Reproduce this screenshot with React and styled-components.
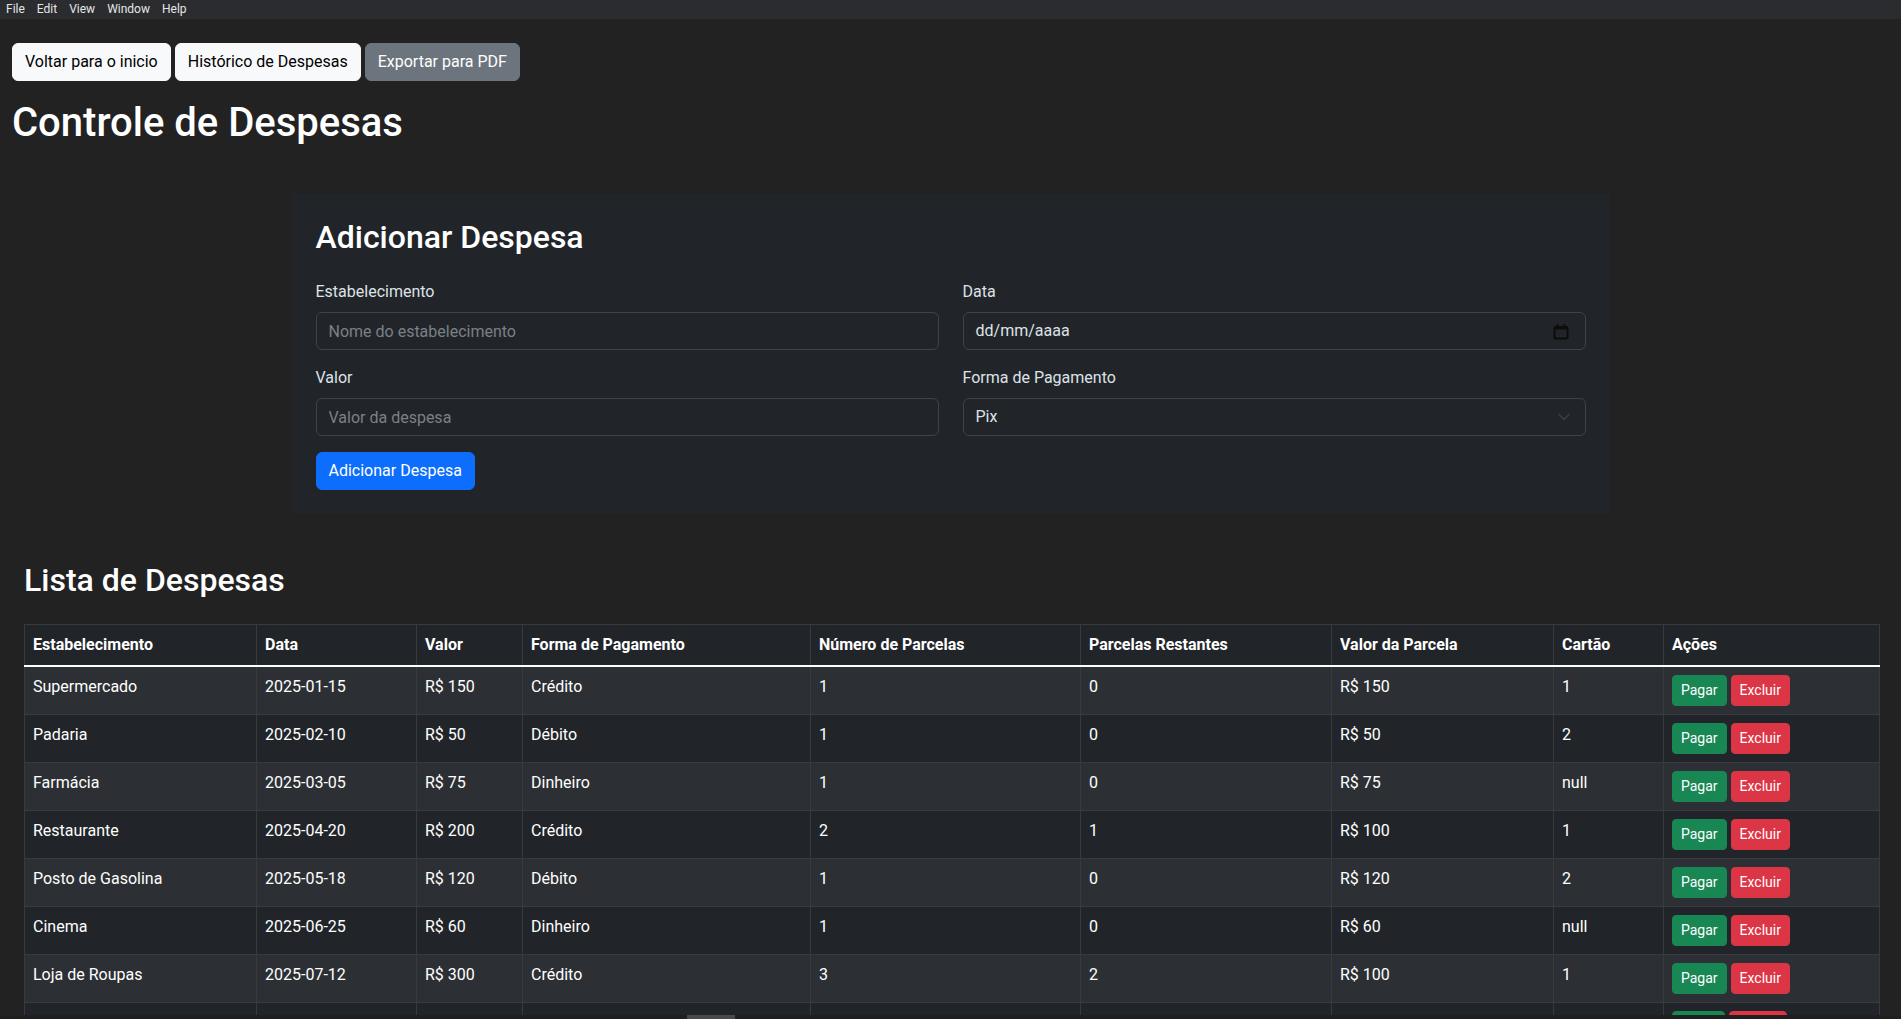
import React from "react";
import styled, { createGlobalStyle } from "styled-components";

const GlobalStyle = createGlobalStyle`
  html, body {
    margin: 0;
    padding: 0;
    background: #222222;
    overflow: hidden;
  }
  body {
    font-family: Roboto, "Liberation Sans", Arial, sans-serif;
    color: #dee2e6;
    font-size: 16px;
    line-height: 1.5;
  }
  * { box-sizing: border-box; }
`;

const MenuBar = styled.div`
  height: 19px;
  background: #2b2c30;
  display: flex;
  align-items: center;
`;

const MenuItem = styled.span`
  font-size: 12px;
  line-height: 19px;
  color: #e6e6e6;
  padding: 0 6px;
`;

const Page = styled.div`
  padding: 24px 12px 0 12px;
`;

const Toolbar = styled.div`
  display: flex;
  gap: 4px;
`;

const Btn = styled.button`
  font-family: inherit;
  font-size: ${(p) => (p.$sm ? "14px" : "16px")};
  line-height: ${(p) => (p.$sm ? "21px" : "24px")};
  min-height: ${(p) => (p.$sm ? "31px" : "38px")};
  padding: ${(p) => (p.$sm ? "4px 8px" : "6px 12px")};
  border-radius: ${(p) => (p.$sm ? "4px" : "6px")};
  border: 1px solid ${(p) => p.$bg};
  background: ${(p) => p.$bg};
  color: ${(p) => p.$fg};
  min-width: ${(p) => p.$minw || 0}px;
  cursor: pointer;
  white-space: nowrap;
`;

const Title = styled.h1`
  margin: 18px 0 0 0;
  font-size: 40px;
  line-height: 48px;
  font-weight: 500;
  color: #ffffff;
`;

const Card = styled.section`
  max-width: 1318px;
  margin: 47px auto 47px auto;
  background: #212529;
  padding: 24px;
`;

const SubTitle = styled.h2`
  margin: 0 0 24px 0;
  font-size: 32px;
  line-height: 38.4px;
  font-weight: 500;
  color: #ffffff;
`;

const FormGrid = styled.div`
  display: grid;
  grid-template-columns: 1fr 1fr;
  column-gap: 24px;
  row-gap: 16px;
  margin-bottom: 16px;
`;

const Field = styled.div`
  display: flex;
  flex-direction: column;
`;

const Label = styled.label`
  font-size: 16px;
  line-height: 24px;
  margin-bottom: 8px;
  color: #dee2e6;
`;

const Input = styled.input`
  font-family: inherit;
  height: 38px;
  font-size: 16px;
  padding: 6px 12px;
  border: 1px solid #3e4349;
  border-radius: 6px;
  background: #212529;
  color: #dee2e6;
  outline: none;
  &::placeholder {
    color: #7b8087;
  }
`;

const FakeBox = styled.div`
  height: 38px;
  display: flex;
  align-items: center;
  justify-content: space-between;
  padding: 6px ${(p) => p.$pr || 12}px 6px 12px;
  border: 1px solid #3e4349;
  border-radius: 6px;
  background: #212529;
  color: #dee2e6;
  font-size: 16px;
`;

const ListSection = styled.section`
  padding: 0 10px 0 12px;
`;

const Table = styled.table`
  width: 100%;
  border-collapse: collapse;
  table-layout: fixed;
  color: #ffffff;
`;

const Th = styled.th`
  text-align: left;
  font-weight: 700;
  padding: 8px;
  line-height: 24px;
  background: #212529;
  border: 1px solid #373b3e;
  border-bottom: 2px solid #ffffff;
  white-space: nowrap;
`;

const Tr = styled.tr`
  background: ${(p) => (p.$odd ? "#2c3034" : "#212529")};
`;

const Td = styled.td`
  padding: 8px;
  line-height: 24px;
  vertical-align: top;
  border: 1px solid #373b3e;
  white-space: nowrap;
`;

const Actions = styled.div`
  display: flex;
  gap: 4px;
`;

const ScrollTrack = styled.div`
  position: fixed;
  left: 0;
  right: 0;
  bottom: 0;
  height: 4px;
  background: #202020;
`;

const ScrollThumb = styled.div`
  position: absolute;
  left: 687px;
  width: 48px;
  top: 0;
  bottom: 0;
  background: #4a4a4a;
`;

const CalendarIcon = () => (
  <svg width="16" height="17" viewBox="0 0 16 17">
    <rect x="1.5" y="4" width="13" height="11.5" rx="1" fill="none" stroke="#0c0c0c" strokeWidth="2" />
    <rect x="1" y="3.5" width="14" height="3" fill="#0c0c0c" />
    <rect x="3.5" y="1" width="2" height="3" fill="#0c0c0c" />
    <rect x="10.5" y="1" width="2" height="3" fill="#0c0c0c" />
  </svg>
);

const Chevron = () => (
  <svg width="12" height="8" viewBox="0 0 12 8">
    <path d="M1 1.5l5 5 5-5" fill="none" stroke="#3a3f45" strokeWidth="1.5" strokeLinecap="round" strokeLinejoin="round" />
  </svg>
);

const cols = [232, 160, 106, 288, 270, 251, 222, 110, 216];
const headers = [
  "Estabelecimento",
  "Data",
  "Valor",
  "Forma de Pagamento",
  "Número de Parcelas",
  "Parcelas Restantes",
  "Valor da Parcela",
  "Cartão",
  "Ações",
];

const rows = [
  ["Supermercado", "2025-01-15", "R$ 150", "Crédito", "1", "0", "R$ 150", "1"],
  ["Padaria", "2025-02-10", "R$ 50", "Débito", "1", "0", "R$ 50", "2"],
  ["Farmácia", "2025-03-05", "R$ 75", "Dinheiro", "1", "0", "R$ 75", "null"],
  ["Restaurante", "2025-04-20", "R$ 200", "Crédito", "2", "1", "R$ 100", "1"],
  ["Posto de Gasolina", "2025-05-18", "R$ 120", "Débito", "1", "0", "R$ 120", "2"],
  ["Cinema", "2025-06-25", "R$ 60", "Dinheiro", "1", "0", "R$ 60", "null"],
  ["Loja de Roupas", "2025-07-12", "R$ 300", "Crédito", "3", "2", "R$ 100", "1"],
  ["", "", "", "", "", "", "", ""],
];

export default function App() {
  return (
    <>
      <GlobalStyle />
      <MenuBar>
        <MenuItem>File</MenuItem>
        <MenuItem>Edit</MenuItem>
        <MenuItem>View</MenuItem>
        <MenuItem>Window</MenuItem>
        <MenuItem>Help</MenuItem>
      </MenuBar>
      <Page>
        <Toolbar>
          <Btn $bg="#f8f9fa" $fg="#000000">Voltar para o inicio</Btn>
          <Btn $bg="#f8f9fa" $fg="#000000">Histórico de Despesas</Btn>
          <Btn $bg="#6c757d" $fg="#ffffff">Exportar para PDF</Btn>
        </Toolbar>
        <Title>Controle de Despesas</Title>

        <Card>
          <SubTitle>Adicionar Despesa</SubTitle>
          <FormGrid>
            <Field>
              <Label>Estabelecimento</Label>
              <Input placeholder="Nome do estabelecimento" />
            </Field>
            <Field>
              <Label>Data</Label>
              <FakeBox $pr={16}>
                <span>dd/mm/aaaa</span>
                <CalendarIcon />
              </FakeBox>
            </Field>
            <Field>
              <Label>Valor</Label>
              <Input placeholder="Valor da despesa" />
            </Field>
            <Field>
              <Label>Forma de Pagamento</Label>
              <FakeBox $pr={15}>
                <span>Pix</span>
                <Chevron />
              </FakeBox>
            </Field>
          </FormGrid>
          <Btn $bg="#0d6efd" $fg="#ffffff">Adicionar Despesa</Btn>
        </Card>

        <ListSection>
          <SubTitle>Lista de Despesas</SubTitle>
          <Table>
            <colgroup>
              {cols.map((w, i) => (
                <col key={i} style={{ width: w }} />
              ))}
            </colgroup>
            <thead>
              <tr>
                {headers.map((h) => (
                  <Th key={h}>{h}</Th>
                ))}
              </tr>
            </thead>
            <tbody>
              {rows.map((r, i) => {
                const last = i === rows.length - 1;
                return (
                  <Tr key={i} $odd={i % 2 === 0}>
                    {r.map((c, j) => (
                      <Td key={j}>{c}</Td>
                    ))}
                    <Td>
                      <Actions>
                        <Btn $sm $bg="#198754" $fg="#ffffff" $minw={last ? 53 : 0}>
                          {last ? "" : "Pagar"}
                        </Btn>
                        <Btn $sm $bg="#dc3545" $fg="#ffffff" $minw={last ? 58 : 0}>
                          {last ? "" : "Excluir"}
                        </Btn>
                      </Actions>
                    </Td>
                  </Tr>
                );
              })}
            </tbody>
          </Table>
        </ListSection>
      </Page>
      <ScrollTrack>
        <ScrollThumb />
      </ScrollTrack>
    </>
  );
}
